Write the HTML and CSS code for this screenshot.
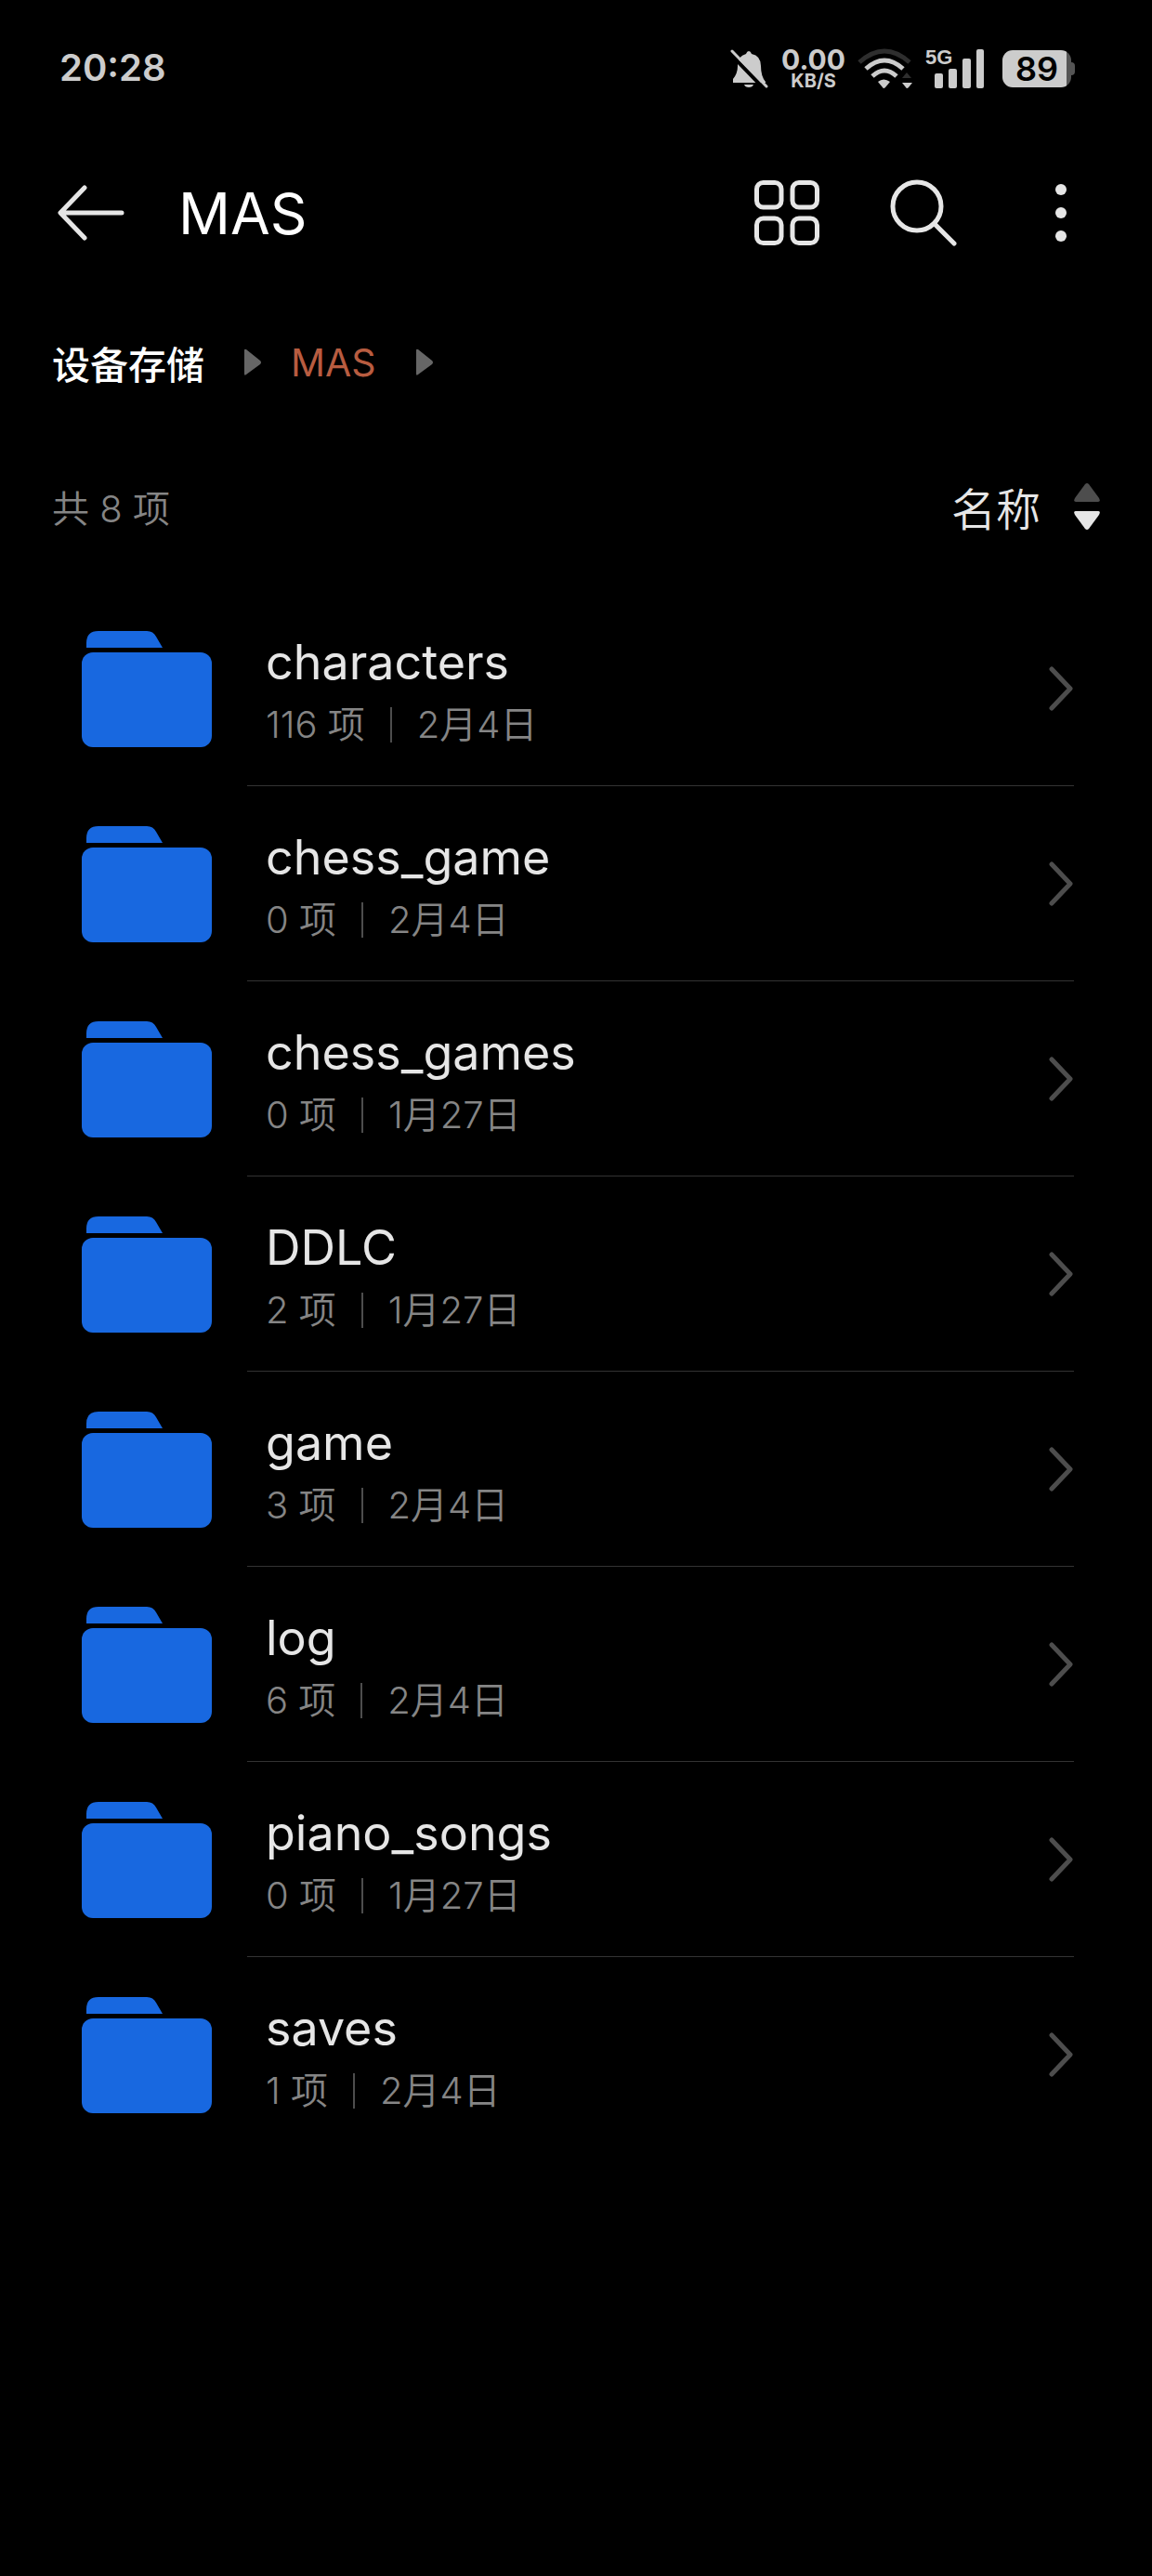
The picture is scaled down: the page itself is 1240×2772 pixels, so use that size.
FILE: index.html
```html
<!DOCTYPE html>
<html lang="zh-CN">
<head>
    <meta charset="UTF-8">
    <meta name="viewport" content="width=device-width, initial-scale=1.0">
    <title>MAS</title>
    <link rel="stylesheet" href="styles.css">
</head>
<body>
    <!-- Shared shapes for the rows -->
    <svg class="sprite" aria-hidden="true">
        <symbol id="folder" viewBox="0 0 140 125">
            <path d="M5 18V13Q5 0 18 0H70Q77 0 80 6L87 18Z"/>
            <rect y="23" width="140" height="102" rx="12"/>
        </symbol>
        <symbol id="chevron" viewBox="0 0 26 48">
            <path d="M3 3L23 24L3 45"/>
        </symbol>
        <symbol id="crumb-arrow" viewBox="0 0 20 30">
            <path d="M1 2Q1 0 3 1L18 13Q20 15 18 17L3 28Q1 30 1 27Z"/>
        </symbol>
    </svg>

    <div class="status-bar">
        <div class="status-time">20:28</div>
        <div class="status-icons">
            <svg class="icon-mute" viewBox="0 0 42 42">
                <path fill="#ccc" d="M3 32Q8 26 8 18V16Q8 8 17 5Q18 2 20 2Q22 2 23 5Q33 7 33 18Q33 29 38 35V36H3ZM15 38H25Q24 41 20 41Q16 41 15 38Z"/>
                <path stroke="#000" stroke-width="4" d="M0 5L35 41"/>
                <path stroke="#ccc" stroke-width="3" stroke-linecap="round" d="M2 2L39 40"/>
            </svg>
            <div class="net-speed">
                <span class="net-value">0.00</span>
                <span class="net-unit">KB/S</span>
            </div>
            <svg class="icon-wifi" viewBox="0 0 60 44">
                <g fill="none" stroke-width="5">
                    <path stroke="#2e2e2e" d="M2 15Q29 -9 56 15"/>
                    <path stroke="#ccc" d="M9 22Q29 4 49 22"/>
                    <path stroke="#ccc" d="M16 30Q29 18 42 30"/>
                </g>
                <path fill="#ccc" d="M22 36Q28 31 35 36L30 42Q28 44 27 42Z"/>
                <path fill="#2e2e2e" d="M48 32L53 26L58 32Z"/>
                <path fill="#ccc" d="M48 37H59L55 42Q53 44 52 42Z"/>
            </svg>
            <div class="signal">
                <span class="signal-type">5G</span>
                <svg class="icon-signal" viewBox="0 0 54 42">
                    <rect y="26" width="9" height="16" rx="2"/>
                    <rect x="15" y="21" width="9" height="21" rx="2"/>
                    <rect x="30" y="10" width="9" height="32" rx="2"/>
                    <rect x="45" width="8" height="42" rx="2"/>
                </svg>
            </div>
            <div class="battery">89</div>
        </div>
    </div>

    <header class="app-bar">
        <button class="icon-button back-button" aria-label="返回">
            <svg width="72" height="60" viewBox="0 0 72 60">
                <path d="M29 3L3 30L29 57M4 30H69"/>
            </svg>
        </button>
        <h1 class="app-title">MAS</h1>
        <div class="app-actions">
            <button class="icon-button" aria-label="网格视图">
                <svg width="70" height="70" viewBox="0 0 70 70">
                    <rect x="2.5" y="2.5" width="26.5" height="26.5" rx="7"/>
                    <rect x="41" y="2.5" width="26.5" height="26.5" rx="7"/>
                    <rect x="2.5" y="41" width="26.5" height="26.5" rx="7"/>
                    <rect x="41" y="41" width="26.5" height="26.5" rx="7"/>
                </svg>
            </button>
            <button class="icon-button" aria-label="搜索">
                <svg width="72" height="72" viewBox="0 0 72 72">
                    <circle cx="29" cy="29" r="26"/>
                    <path d="M48 48L69 69"/>
                </svg>
            </button>
            <button class="icon-button more-button" aria-label="更多">
                <svg width="12" height="62" viewBox="0 0 12 62">
                    <circle cx="6" cy="6" r="6"/>
                    <circle cx="6" cy="31" r="6"/>
                    <circle cx="6" cy="56" r="6"/>
                </svg>
            </button>
        </div>
    </header>

    <nav class="breadcrumb">
        <a href="#" class="crumb">设备存储</a>
        <svg class="crumb-arrow"><use href="#crumb-arrow"/></svg>
        <a href="#" class="crumb current">MAS</a>
        <svg class="crumb-arrow"><use href="#crumb-arrow"/></svg>
    </nav>

    <div class="list-header">
        <span class="item-count">共 8 项</span>
        <button class="sort-button">
            名称
            <svg width="28" height="50" viewBox="0 0 28 50">
                <path fill="#4d4d4d" d="M12 1Q14 -1 16 1L27 16Q29 20 26 20H2Q-1 20 1 16Z"/>
                <path fill="#e6e6e6" d="M12 49Q14 51 16 49L27 34Q29 30 26 30H2Q-1 30 1 34Z"/>
            </svg>
        </button>
    </div>

    <main class="file-list">
        <a href="#" class="file-row">
            <svg class="folder"><use href="#folder"/></svg>
            <div class="file-body">
                <div class="file-info">
                    <div class="file-name">characters</div>
                    <div class="file-meta"><span>116 项</span><span class="file-date">2月4日</span></div>
                </div>
                <svg class="chevron"><use href="#chevron"/></svg>
            </div>
        </a>
        <a href="#" class="file-row">
            <svg class="folder"><use href="#folder"/></svg>
            <div class="file-body">
                <div class="file-info">
                    <div class="file-name">chess_game</div>
                    <div class="file-meta"><span>0 项</span><span class="file-date">2月4日</span></div>
                </div>
                <svg class="chevron"><use href="#chevron"/></svg>
            </div>
        </a>
        <a href="#" class="file-row">
            <svg class="folder"><use href="#folder"/></svg>
            <div class="file-body">
                <div class="file-info">
                    <div class="file-name">chess_games</div>
                    <div class="file-meta"><span>0 项</span><span class="file-date">1月27日</span></div>
                </div>
                <svg class="chevron"><use href="#chevron"/></svg>
            </div>
        </a>
        <a href="#" class="file-row">
            <svg class="folder"><use href="#folder"/></svg>
            <div class="file-body">
                <div class="file-info">
                    <div class="file-name">DDLC</div>
                    <div class="file-meta"><span>2 项</span><span class="file-date">1月27日</span></div>
                </div>
                <svg class="chevron"><use href="#chevron"/></svg>
            </div>
        </a>
        <a href="#" class="file-row">
            <svg class="folder"><use href="#folder"/></svg>
            <div class="file-body">
                <div class="file-info">
                    <div class="file-name">game</div>
                    <div class="file-meta"><span>3 项</span><span class="file-date">2月4日</span></div>
                </div>
                <svg class="chevron"><use href="#chevron"/></svg>
            </div>
        </a>
        <a href="#" class="file-row">
            <svg class="folder"><use href="#folder"/></svg>
            <div class="file-body">
                <div class="file-info">
                    <div class="file-name">log</div>
                    <div class="file-meta"><span>6 项</span><span class="file-date">2月4日</span></div>
                </div>
                <svg class="chevron"><use href="#chevron"/></svg>
            </div>
        </a>
        <a href="#" class="file-row">
            <svg class="folder"><use href="#folder"/></svg>
            <div class="file-body">
                <div class="file-info">
                    <div class="file-name">piano_songs</div>
                    <div class="file-meta"><span>0 项</span><span class="file-date">1月27日</span></div>
                </div>
                <svg class="chevron"><use href="#chevron"/></svg>
            </div>
        </a>
        <a href="#" class="file-row">
            <svg class="folder"><use href="#folder"/></svg>
            <div class="file-body">
                <div class="file-info">
                    <div class="file-name">saves</div>
                    <div class="file-meta"><span>1 项</span><span class="file-date">2月4日</span></div>
                </div>
                <svg class="chevron"><use href="#chevron"/></svg>
            </div>
        </a>
    </main>
</body>
</html>
```
FILE: styles.css
```css
* {
    margin: 0;
    padding: 0;
    box-sizing: border-box;
}

body {
    font-family: Inter, "Noto Sans CJK SC", sans-serif;
    background-color: #000;
    color: #e6e6e6;
    min-height: 100vh;
}

a {
    color: inherit;
    text-decoration: none;
}

button {
    background: none;
    border: none;
    color: inherit;
    font-family: inherit;
    cursor: pointer;
}

svg {
    display: block;
    flex-shrink: 0;
}

.sprite {
    position: absolute;
    width: 0;
    height: 0;
}

/* Status bar */
.status-bar {
    display: flex;
    justify-content: space-between;
    align-items: center;
    height: 148px;
    padding: 0 87px 0 64px;
    color: #ccc;
}

.status-time {
    padding-bottom: 4px;
    font-size: 40px;
    font-weight: 600;
}

.status-icons {
    display: flex;
    align-items: center;
    gap: 13px;
}

.icon-mute {
    width: 42px;
    height: 42px;
}

.net-speed {
    display: flex;
    flex-direction: column;
    align-items: center;
    font-weight: 700;
}

.net-value {
    font-size: 30px;
    line-height: 26px;
}

.net-unit {
    font-size: 20px;
    line-height: 20px;
}

.icon-wifi {
    width: 60px;
    height: 44px;
}

.signal {
    position: relative;
    padding-left: 10px;
}

.signal-type {
    position: absolute;
    top: -4px;
    left: 0;
    font-family: "Liberation Sans", sans-serif;
    font-size: 22px;
    font-weight: 700;
    line-height: 26px;
}

.icon-signal {
    width: 54px;
    height: 42px;
    fill: #ccc;
}

/* Battery, with the used part and the tip in dark grey */
.battery {
    position: relative;
    width: 74px;
    height: 40px;
    margin-left: 6px;
    border-radius: 11px;
    background: linear-gradient(to right, #ccc 69px, #555 69px);
    color: #000;
    font-size: 36px;
    font-weight: 600;
    line-height: 40px;
    text-align: center;
}

.battery::after {
    content: "";
    position: absolute;
    top: 13px;
    left: 74px;
    width: 4px;
    height: 14px;
    border-radius: 0 4px 4px 0;
    background-color: #555;
}

/* App bar */
.app-bar {
    display: flex;
    align-items: center;
    height: 162px;
    padding: 0 92px 0 62px;
}

.icon-button svg {
    fill: none;
    stroke: #e6e6e6;
    stroke-width: 5;
    stroke-linecap: round;
    stroke-linejoin: round;
}

.more-button svg {
    fill: #e6e6e6;
    stroke: none;
}

.app-title {
    margin-left: 58px;
    color: #fff;
    font-size: 62px;
    font-weight: 400;
}

.app-actions {
    display: flex;
    align-items: center;
    gap: 76px;
    margin-left: auto;
}

.more-button {
    margin-left: 30px;
}

/* Breadcrumb */
.breadcrumb {
    display: flex;
    align-items: center;
    height: 160px;
    padding: 0 56px;
    font-size: 41px;
}

.crumb {
    color: #fff;
    font-weight: 500;
}

.crumb.current {
    color: #b85c40;
    font-weight: 400;
}

.crumb-arrow {
    width: 20px;
    height: 30px;
    margin: 0 31px 0 42px;
    fill: #666;
}

/* Count and sort order */
.list-header {
    display: flex;
    justify-content: space-between;
    align-items: center;
    height: 150px;
    padding: 0 56px;
}

.item-count {
    color: #858585;
    font-size: 40px;
    font-weight: 350;
}

.sort-button {
    display: flex;
    align-items: center;
    gap: 36px;
    font-size: 48px;
    font-weight: 350;
}

/* Folder rows */
.file-list {
    padding: 16px 84px 0 88px;
}

.file-row {
    display: flex;
    align-items: center;
    gap: 38px;
    height: 210px;
}

.folder {
    width: 140px;
    height: 125px;
    fill: #1868e0;
}

.file-body {
    display: flex;
    flex: 1;
    align-items: center;
    justify-content: space-between;
    height: 100%;
    padding-left: 20px;
    padding-right: 1px;
    border-bottom: 1px solid #333;
}

.file-row:last-child .file-body {
    border-bottom-color: transparent;
}

.file-info {
    padding-top: 10px;
}

.file-name {
    font-size: 52px;
    line-height: 68px;
}

.file-meta {
    display: flex;
    align-items: center;
    color: #858585;
    font-size: 40px;
    font-weight: 350;
    line-height: 66px;
}

.file-date {
    display: flex;
    align-items: center;
}

.file-date::before {
    content: "";
    width: 2px;
    height: 38px;
    margin: 0 27px;
    background-color: #4d4d4d;
}

.chevron {
    width: 26px;
    height: 48px;
    fill: none;
    stroke: #4d4d4d;
    stroke-width: 5;
    stroke-linecap: round;
    stroke-linejoin: round;
}
```
